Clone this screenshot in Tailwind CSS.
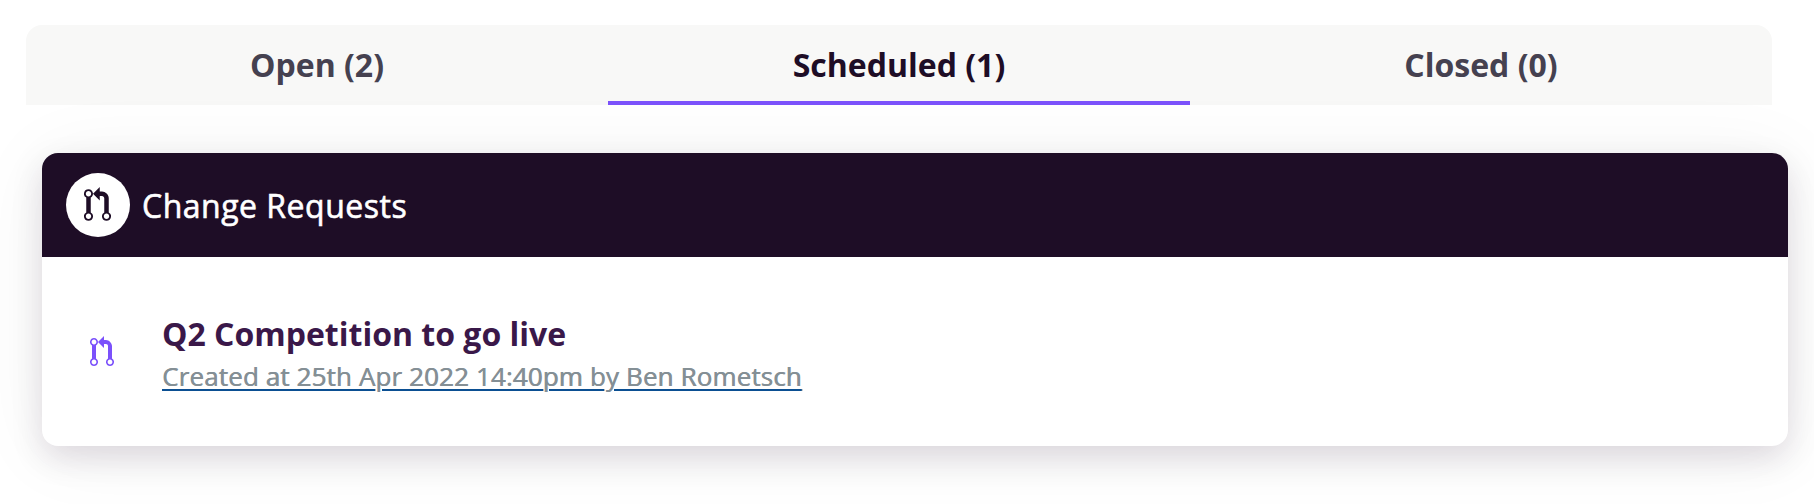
<!DOCTYPE html>
<html lang="en">
<head>
<meta charset="utf-8">
<title>Change Requests</title>
<script src="https://cdn.jsdelivr.net/npm/@tailwindcss/browser@4"></script>
</head>
<body class="bg-white font-['Open_Sans',sans-serif] h-[504px] overflow-hidden pt-[25px]">
<svg class="hidden"><symbol id="pr" viewBox="0 0 12 16"><path fill="currentColor" d="M11 11.28V5c-.03-.78-.34-1.47-.94-2.06C9.46 2.35 8.78 2.03 8 2H7V0L4 3l3 3V4h1c.27.02.48.11.69.31.21.2.3.42.31.69v6.28A1.993 1.993 0 0 0 10 15a1.993 1.993 0 0 0 1-3.72zm-1 2.92c-.66 0-1.2-.55-1.2-1.2 0-.65.55-1.2 1.2-1.2.65 0 1.2.55 1.2 1.2 0 .65-.55 1.2-1.2 1.2zM4 3c0-1.11-.89-2-2-2a1.993 1.993 0 0 0-1 3.72v6.56A1.993 1.993 0 0 0 2 15a1.993 1.993 0 0 0 1-3.72V4.72c.59-.34 1-.98 1-1.72zm-.8 10c0 .66-.55 1.2-1.2 1.2-.65 0-1.2-.55-1.2-1.2 0-.65.55-1.2 1.2-1.2.65 0 1.2.55 1.2 1.2zM2 4.2C1.34 4.2.8 3.65.8 3c0-.65.55-1.2 1.2-1.2.65 0 1.2.55 1.2 1.2 0 .65-.55 1.2-1.2 1.2z"/></symbol></svg>
<nav class="ml-[26px] grid h-20 w-[1746px] grid-cols-3 rounded-t-2xl bg-[#f8f8f7] text-center text-[32px] leading-[80px] font-bold text-[#454150]">
  <div>Open (2)</div>
  <div class="h-20 border-b-4 border-[#7b51fb] text-[#1e0d26]">Scheduled (1)</div>
  <div>Closed (0)</div>
</nav>
<main class="mt-12 ml-[42px] h-[293px] w-[1746px] overflow-hidden rounded-2xl bg-white shadow-[0_12px_32px_rgba(40,10,50,0.13),0_6px_80px_rgba(0,0,0,0.06)]">
  <header class="flex h-[104px] items-center gap-3 bg-[#1e0d26] pl-6 text-[32px] font-medium text-white">
    <span class="flex size-16 items-center justify-center rounded-full bg-white text-[#1e0d26]"><svg class="mr-px h-9 w-[27px]"><use href="#pr"/></svg></span>
    <h1 class="pt-px tracking-[0.5px] [-webkit-text-stroke:0.6px_currentColor]">Change Requests</h1>
  </header>
  <div class="flex items-start pt-[53px] pl-12">
    <svg class="mt-[26px] h-8 w-6 text-[#7b51fb]"><use href="#pr"/></svg>
    <div class="ml-12">
      <h2 class="text-[32px] leading-[48px] font-bold text-[#3a1849]">Q2 Competition to go live</h2>
      <p class="text-[26px] leading-[37px] font-medium tracking-[0.12px] text-[#848f95] underline decoration-[#0b4f92] decoration-2 underline-offset-[3px] [text-shadow:0.6px_0_0_#848f95]">Created at 25th Apr 2022 14:40pm by Ben Rometsch</p>
    </div>
  </div>
</main>
</body>
</html>
